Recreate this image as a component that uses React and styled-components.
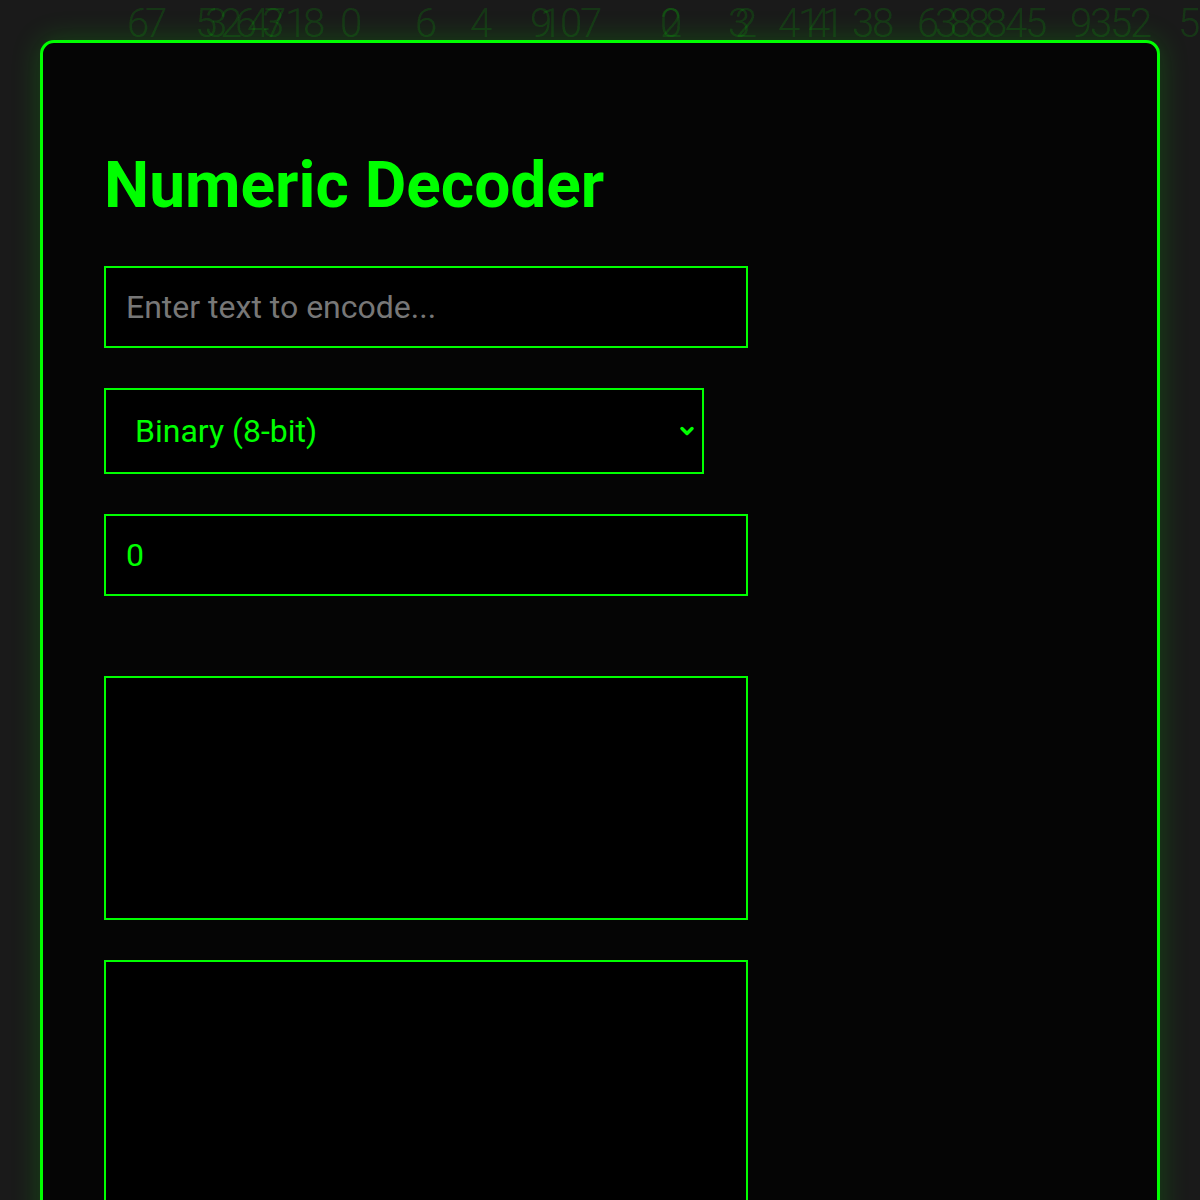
import React from "react";
import styled, { createGlobalStyle } from "styled-components";

const GlobalStyle = createGlobalStyle`
  body {
    margin: 0;
    background: #1a1a1a;
    font-family: Roboto, "Noto Sans", sans-serif;
    color: #00ff00;
  }
`;

const rain = [
  [127, "6"], [145, "7"], [195, "5"], [205, "3"], [220, "2"], [235, "6"],
  [247, "4"], [262, "3"], [264, "7"], [285, "1"], [303, "8"], [340, "0"],
  [415, "6"], [470, "4"], [530, "9"], [540, "1"], [560, "0"], [580, "7"],
  [660, "2"], [660, "0"], [728, "3"], [735, "2"], [778, "4"], [798, "1"],
  [808, "4"], [822, "1"], [852, "3"], [872, "8"], [917, "6"], [935, "3"],
  [950, "8"], [968, "8"], [985, "8"], [1005, "4"], [1025, "5"], [1070, "9"],
  [1090, "3"], [1110, "5"], [1130, "2"], [1178, "5"],
];

const Page = styled.main`
  position: relative;
  min-height: 100vh;
  padding: 40px;
  box-sizing: border-box;
  overflow: hidden;
`;

const Rain = styled.div`
  position: absolute;
  inset: 0;
  pointer-events: none;
  z-index: 0;
`;

const Drop = styled.span`
  position: absolute;
  top: 4px;
  font-family: Roboto, sans-serif;
  font-weight: 300;
  font-size: 40px;
  line-height: 1;
  color: rgba(0, 255, 0, 0.14);
`;

const Card = styled.section`
  position: relative;
  z-index: 1;
  background: #050505;
  border: 3px solid #00ff00;
  border-radius: 14px;
  padding: 60px 60px 60px 61px;
  box-shadow: 0 0 30px rgba(0, 255, 0, 0.2);
  display: flex;
  flex-direction: column;
  align-items: flex-start;
`;

const Title = styled.h1`
  font-size: 64px;
  font-weight: 700;
  color: #00ff00;
  margin: 45px 0 43px;
`;

const field = `
  display: block;
  font-family: Roboto, sans-serif;
  font-size: 32px;
  color: #00ff00;
  background: #000;
  border: 2px solid #00ff00;
  border-radius: 0;
  outline: none;
`;

const TextInput = styled.input`
  ${field}
  width: 600px;
  padding: 20px;
  height: 38px;
  box-sizing: content-box;
  margin-bottom: ${(p) => p.$gap || 40}px;
  &::placeholder {
    color: #777;
  }
`;

const SelectWrap = styled.div`
  position: relative;
  width: 600px;
  margin-bottom: 40px;
`;

const Select = styled.select`
  ${field}
  appearance: none;
  width: 600px;
  height: 86px;
  padding: 0 40px 0 29px;
`;

const Chevron = styled.svg`
  position: absolute;
  right: 9px;
  top: 50%;
  width: 16px;
  height: 12px;
  margin-top: -6px;
  pointer-events: none;
`;

const Area = styled.textarea`
  ${field}
  width: 600px;
  height: 200px;
  padding: 20px;
  resize: none;
  margin-bottom: 40px;
`;

export default function App() {
  return (
    <>
      <GlobalStyle />
      <Page>
        <Rain>
          {rain.map(([x, d], i) => (
            <Drop key={i} style={{ left: x }}>
              {d}
            </Drop>
          ))}
        </Rain>
        <Card>
          <Title>Numeric Decoder</Title>
          <TextInput type="text" placeholder="Enter text to encode..." />
          <SelectWrap>
            <Select defaultValue="binary">
              <option value="binary">Binary (8-bit)</option>
              <option value="hex">Hexadecimal</option>
              <option value="octal">Octal</option>
              <option value="decimal">Decimal</option>
            </Select>
            <Chevron viewBox="0 0 16 12">
              <path
                d="M3 3.5 L8 8.5 L13 3.5"
                fill="none"
                stroke="#00ff00"
                strokeWidth="3.5"
                strokeLinecap="round"
                strokeLinejoin="round"
              />
            </Chevron>
          </SelectWrap>
          <TextInput type="number" defaultValue="0" $gap={80} />
          <Area readOnly />
          <Area readOnly />
        </Card>
      </Page>
    </>
  );
}
